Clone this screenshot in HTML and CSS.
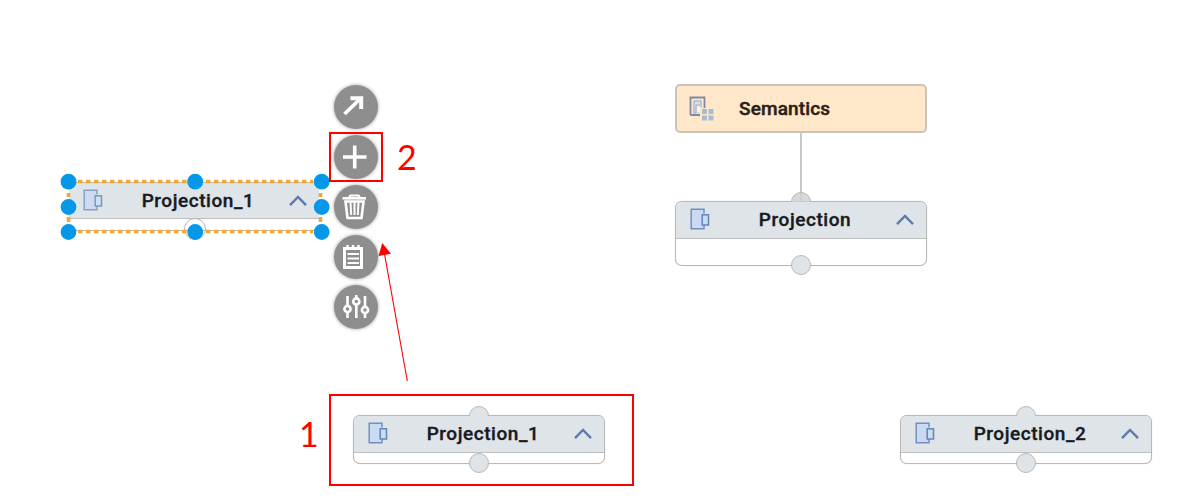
FILE: index.html
```html
<!DOCTYPE html>
<html lang="en">
<head>
<meta charset="utf-8">
<title>Projection nodes</title>
<link rel="stylesheet" href="styles.css">
</head>
<body>
<svg class="defs" width="0" height="0">
  <symbol id="projection" viewBox="0 0 20 22">
    <path d="M14 5.5V1.2H1.2v19.6H14V17" fill="#c9daf2"/>
    <path d="M14 5.5V1.2H1.2v19.6H14V17" fill="none" stroke="#7390bd" stroke-width="1.5"/>
    <rect x="12.2" y="6.8" width="6.3" height="10.2" fill="#c9def5" stroke="#6484b5" stroke-width="1.5"/>
  </symbol>
  <symbol id="chevron" viewBox="0 0 20 12"><path d="M2 10.2 10 2l8 8.2" fill="none" stroke="#6079ad" stroke-width="2.4"/></symbol>
</svg>
<main class="canvas">
  <svg class="layer" width="1182" height="503">
    <path d="M801 132v70" stroke="#c9c9c9" stroke-width="2"/>
  </svg>

  <section class="node semantics">
    <svg class="icon" width="26" height="26" viewBox="0 0 26 26">
      <path d="M1.500 19V1.500h14V12M1.500 19H11" fill="none" stroke="#8588a3" stroke-width="1.800"/>
      <path d="M4 4h9v8H11v6H4z" fill="#d5e1ee"/>
      <path d="M5 17V5h7v6M5 17h2V9h4" fill="none" stroke="#a1abc0" stroke-width="1"/>
      <path d="M8 10h3v6H8z" fill="#fff1dd"/>
      <path d="M13 13h5v5h-5zM19.500 13h5v5h-5zM13 19.500h5v5h-5zM19.500 19.500h5v5h-5z" fill="#a7bdd4"/>
    </svg>
    <span class="title">Semantics</span>
  </section>

  <section class="node projection">
    <i class="port top linked"></i>
    <header class="head"><svg class="icon" width="20" height="22"><use href="#projection"/></svg><span class="title">Projection</span><svg class="chevron" width="20" height="12"><use href="#chevron"/></svg></header>
    <i class="port bottom"></i>
  </section>

  <section class="node first">
    <i class="port top"></i>
    <header class="head"><svg class="icon" width="20" height="22"><use href="#projection"/></svg><span class="title">Projection_1</span><svg class="chevron" width="20" height="12"><use href="#chevron"/></svg></header>
    <i class="port bottom"></i>
  </section>

  <section class="node second">
    <i class="port top"></i>
    <header class="head"><svg class="icon" width="20" height="22"><use href="#projection"/></svg><span class="title">Projection_2</span><svg class="chevron" width="20" height="12"><use href="#chevron"/></svg></header>
    <i class="port bottom"></i>
  </section>

  <section class="node selected">
    <header class="head"><svg class="icon" width="20" height="22"><use href="#projection"/></svg><span class="title">Projection_1</span><svg class="chevron" width="20" height="12"><use href="#chevron"/></svg></header>
    <i class="port bottom"></i>
  </section>
  <svg class="layer" width="1182" height="503">
    <path d="M69 182.500H322M69 230.500H322" stroke="#bcb8b5" stroke-width="1"/>
    <path d="M78 181.500H313M78 231.500H313" stroke="#eda935" stroke-width="3.400" stroke-dasharray="4.500 3.500"/>
    <path d="M68.500 193v4M68.500 217v5M320.500 193v4M320.500 217v5" stroke="#eda935" stroke-width="3.600"/>
    <g fill="#0797e9">
      <circle cx="68.500" cy="181.700" r="7.900"/><circle cx="195.200" cy="181.700" r="7.900"/><circle cx="321.700" cy="181.700" r="7.900"/>
      <circle cx="68.500" cy="207" r="7.900"/><circle cx="321.700" cy="207" r="7.900"/>
      <circle cx="68.500" cy="232" r="7.900"/><circle cx="195.200" cy="232" r="7.900"/><circle cx="321.700" cy="232" r="7.900"/>
    </g>
  </svg>

  <nav class="tools">
    <button class="tool" aria-label="Connect"><svg width="44" height="44" fill="none" stroke="#fff"><path d="M10.500 29 25.500 14.500" stroke-width="3.600"/><path d="M16.500 13.300H27.200V24" stroke-width="4"/></svg></button>
    <button class="tool" aria-label="Add"><svg width="44" height="44" stroke="#fff" stroke-width="3.600"><path d="M9 22H32.500M20.700 10.500V33.500"/></svg></button>
    <button class="tool" aria-label="Delete"><svg width="44" height="44" fill="none" stroke="#fff"><path d="M8.500 13.300H32" stroke-width="2.600"/><path d="M15 12 16.500 10.500h8l1.500 1.500" stroke-width="2"/><path d="M11.500 16.500H29.500L27.500 33H13.500z" stroke-width="2.600"/><path d="M16.500 17.500 17.200 30M20.500 17.500V30M24.500 17.500 23.800 30" stroke-width="2"/></svg></button>
    <button class="tool" aria-label="Properties"><svg width="44" height="44" fill="none" stroke="#fff"><path d="M10.500 13.500H27.500V32.500H10.500z" stroke-width="3"/><path d="M13.500 10v4M19 10v4M24.500 10v4" stroke-width="2.400"/><path d="M13.500 19H25M13.500 23.500H25M13.500 28H25" stroke-width="2"/></svg></button>
    <button class="tool" aria-label="Settings"><svg width="44" height="44" fill="none" stroke="#fff" stroke-width="2.600"><path d="M13.500 11V20.500M13.500 27.500V33M22.300 10v3M22.300 19.500V33M31 11V21.500M31 28.500v4.500"/><circle cx="13.500" cy="24" r="3.100"/><circle cx="22.300" cy="16.500" r="3.100"/><circle cx="31" cy="25" r="3.100"/></svg></button>
  </nav>

  <div class="callout add"></div>
  <div class="callout source"></div>
  <span class="step one">1</span>
  <span class="step two">2</span>
  <svg class="layer" width="1182" height="503">
    <path d="M407.300 381 384.500 254" stroke="#f00" stroke-width="1.100"/>
    <path d="M382.300 243 391 253.700 378.500 256z" fill="#f00"/>
  </svg>
</main>
</body>
</html>
```
FILE: styles.css
```css
* { box-sizing: border-box; }
body { margin: 0; background: #fff; font-family: Roboto, "Liberation Sans", sans-serif; }
.defs { position: absolute; }
.canvas { position: relative; width: 1182px; height: 503px; overflow: hidden; }
.layer { position: absolute; inset: 0; pointer-events: none; }

.node { position: absolute; width: 252px; border: 1px solid #b8b8b8; box-shadow: 0 0 1px #c4c4c4; border-radius: 7px; background: #fff; }
.semantics { left: 675px; top: 84px; height: 49px; background: #ffe8ca; border: 2px solid #cbc2b8; border-radius: 5px; display: flex; align-items: center; box-shadow: none; }
.projection { left: 675px; top: 201px; height: 65px; }
.first { left: 353px; top: 415px; height: 49px; }
.second { left: 900px; top: 415px; height: 49px; }
.selected { left: 68px; top: 182px; height: 50px; border-color: transparent; border-radius: 0; box-shadow: none; }

.head { position: relative; display: flex; align-items: center; height: 37px; background: #dfe4e9; border-bottom: 1px solid #bfbfbf; border-radius: 6px 6px 0 0; }
.selected .head { height: 36px; border-radius: 0; }
.icon { flex: none; margin-left: 14px; }
.head .icon { margin-top: -2px; }
.semantics .icon { margin-left: 12px; }
.title { flex: 1; text-align: center; font-weight: 500; font-size: 19px; line-height: 24px; letter-spacing: .55px; color: #171a1e; white-space: nowrap; -webkit-text-stroke: .35px; }
.semantics .title { flex: none; margin-left: 24px; color: #2b2018; letter-spacing: .15px; -webkit-text-stroke: .45px; }
.chevron { flex: none; margin-right: 11px; }
.head .title { padding-left: 5px; }

.port { position: absolute; left: 115px; width: 20px; height: 20px; border: 1.5px solid #b8b8b8; border-radius: 50%; background: #dfe4e8; }
.port.top { top: -10px; }
.port.linked { background: rgba(205, 208, 211, .8); }
.port.bottom { bottom: -10px; }
.selected .port.bottom { left: 115px; bottom: -9px; width: 22px; height: 22px; background: #fff; }
.selected .icon { opacity: .8; }

.tools { position: absolute; left: 334px; top: 85px; display: flex; flex-direction: column; gap: 6px; }
.tool { width: 44px; height: 44px; padding: 0; border: 0; border-radius: 50%; background: #8e8e8e; box-shadow: 0 0 3px 1px #c8c8c8; }
.tool svg { display: block; }

.callout { position: absolute; border: 2px solid #f00; }
.callout.add { left: 329px; top: 132px; width: 54px; height: 50px; }
.callout.source { left: 329px; top: 394px; width: 305px; height: 92px; }
.step { position: absolute; font: 34px/40px Lato, sans-serif; color: #f00; }
.one { left: 299px; top: 414px; }
.two { left: 397px; top: 137px; }
```
